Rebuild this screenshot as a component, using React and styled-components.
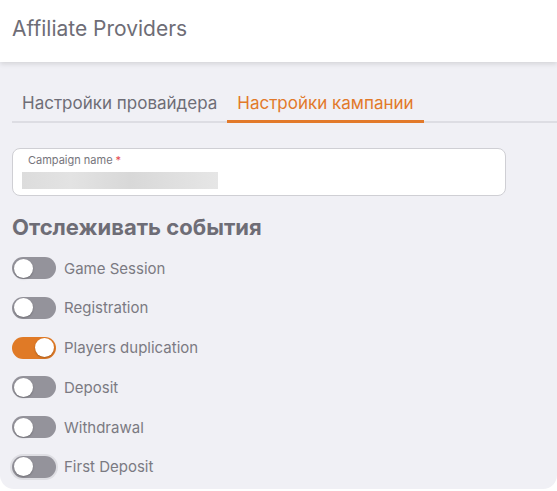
import React from 'react';
import styled, { createGlobalStyle } from 'styled-components';

const GlobalStyle = createGlobalStyle`
  body {
    margin: 0;
    background: #ffffff;
    font-family: Inter, "Noto Sans", sans-serif;
  }
`;

const Page = styled.div`
  width: 557px;
  height: 491px;
  display: flex;
  flex-direction: column;
  overflow: hidden;
`;

const Header = styled.header`
  height: 62px;
  padding: 0 12px;
  display: flex;
  align-items: center;
  background: #ffffff;
  box-shadow: 0 2px 5px rgba(0, 0, 0, 0.12);
  position: relative;
  z-index: 1;
`;

const Title = styled.h1`
  margin: 0 0 6px;
  font-size: 21px;
  font-weight: 400;
  color: #6e6d76;
`;

const Panel = styled.div`
  flex: 1;
  margin-bottom: 2px;
  padding: 26px 0 0 12px;
  background: #f0f0f5;
  border-radius: 0 0 14px 14px;
`;

const Tabs = styled.div`
  display: flex;
  border-bottom: 2px solid #dddde3;
  height: 33px;
`;

const Tab = styled.div`
  padding: 5px 10px 0;
  font-size: 17px;
  color: ${(p) => (p.active ? '#e2792a' : '#6e6d76')};
  border-bottom: 3px solid ${(p) => (p.active ? '#e2792a' : 'transparent')};
  margin-bottom: -2px;
`;

const Field = styled.div`
  margin-top: 25px;
  width: 494px;
  height: 48px;
  box-sizing: border-box;
  padding: 5px 0 0 9px;
  background: #ffffff;
  border: 1px solid #cfcfd4;
  border-radius: 8px;
`;

const Label = styled.div`
  font-size: 11px;
  color: #76757c;
  padding-left: 6px;
  line-height: 13px;
  span {
    color: #e5474b;
    margin-left: 3px;
  }
`;

const Blur = styled.div`
  margin-top: 5px;
  width: 196px;
  height: 17px;
  background: linear-gradient(90deg, #dcdcdc, #e3e3e3 25%, #d8d8d8 55%, #e6e6e6);
`;

const Heading = styled.h2`
  margin: 18px 0 16px;
  font-size: 22px;
  line-height: 27px;
  font-weight: 700;
  color: #6e6d76;
`;

const List = styled.div`
  display: flex;
  flex-direction: column;
  gap: 17.8px;
`;

const Row = styled.label`
  display: flex;
  align-items: center;
  gap: 8px;
  font-size: 15px;
  color: #7b7a82;
`;

const Track = styled.span`
  width: 44px;
  height: 22px;
  border-radius: 11px;
  box-sizing: border-box;
  padding: 0 2px;
  display: flex;
  align-items: center;
  justify-content: ${(p) => (p.on ? 'flex-end' : 'flex-start')};
  background: ${(p) => (p.on ? '#e07a26' : '#94939b')};
  box-shadow: ${(p) => (p.focus ? '0 0 0 2px #dedee3' : 'none')};
`;

const Thumb = styled.span`
  width: 19px;
  height: 19px;
  border-radius: 50%;
  background: #ffffff;
  box-shadow: 0 1px 2px rgba(0, 0, 0, 0.25);
`;

const events = [
  { name: 'Game Session', on: false },
  { name: 'Registration', on: false },
  { name: 'Players duplication', on: true },
  { name: 'Deposit', on: false },
  { name: 'Withdrawal', on: false },
  { name: 'First Deposit', on: false, focus: true },
];

const App = () => (
  <Page>
    <GlobalStyle />
    <Header>
      <Title>Affiliate Providers</Title>
    </Header>
    <Panel>
      <Tabs>
        <Tab>Настройки провайдера</Tab>
        <Tab active>Настройки кампании</Tab>
      </Tabs>
      <Field>
        <Label>
          Campaign name
          <span>*</span>
        </Label>
        <Blur />
      </Field>
      <Heading>Отслеживать события</Heading>
      <List>
        {events.map((ev) => (
          <Row key={ev.name}>
            <Track on={ev.on} focus={ev.focus}>
              <Thumb />
            </Track>
            {ev.name}
          </Row>
        ))}
      </List>
    </Panel>
  </Page>
);

export default App;
